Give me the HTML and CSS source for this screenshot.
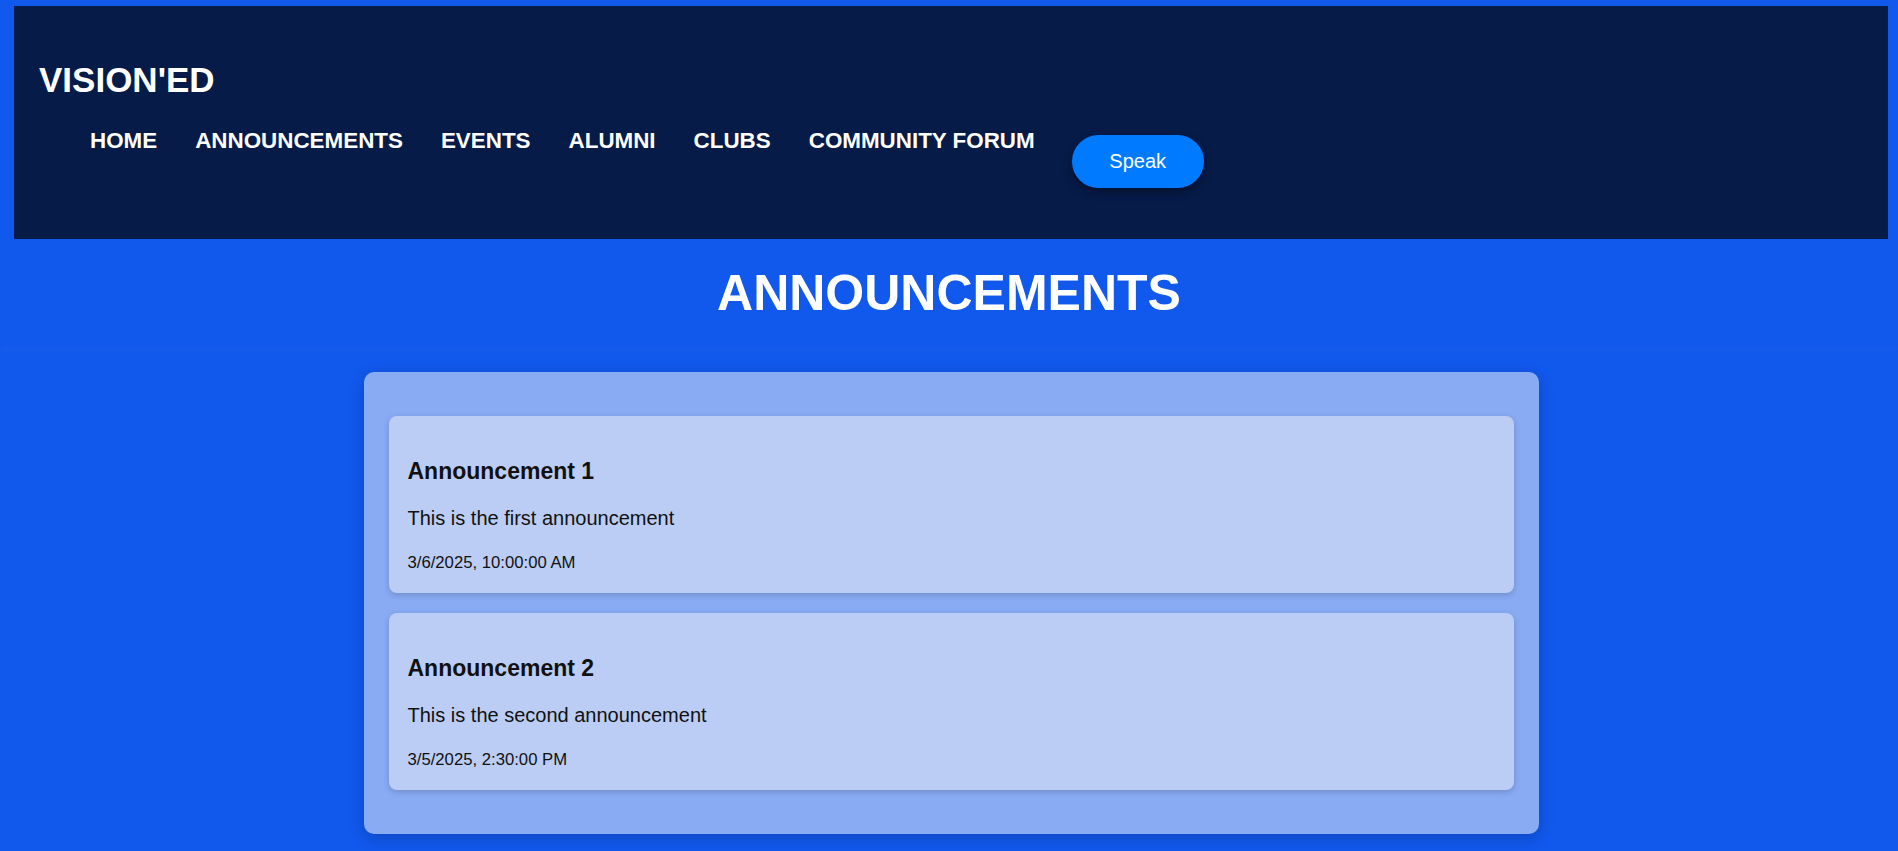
FILE: index.html
```html
<!DOCTYPE html>
<html lang="en">
<head>
<meta charset="utf-8">
<title>Vision'ED - Announcements</title>
<link rel="stylesheet" href="styles.css">
</head>
<body>
<header class="site-header">
  <h1 class="logo">VISION'ED</h1>
  <nav class="nav">
    <ul class="nav-list">
      <li><a class="nav-link" href="#">HOME</a></li>
      <li><a class="nav-link" href="#">ANNOUNCEMENTS</a></li>
      <li><a class="nav-link" href="#">EVENTS</a></li>
      <li><a class="nav-link" href="#">ALUMNI</a></li>
      <li><a class="nav-link" href="#">CLUBS</a></li>
      <li><a class="nav-link" href="#">COMMUNITY FORUM</a></li>
    </ul>
    <button class="speak-btn" type="button">Speak</button>
  </nav>
</header>

<section class="page-title">
  <h2 class="page-title-text">ANNOUNCEMENTS</h2>
</section>

<main class="main">
  <div class="panel">
    <article class="card">
      <h3 class="card-title">Announcement 1</h3>
      <p class="card-body">This is the first announcement</p>
      <p class="card-date">3/6/2025, 10:00:00 AM</p>
    </article>
    <article class="card">
      <h3 class="card-title">Announcement 2</h3>
      <p class="card-body">This is the second announcement</p>
      <p class="card-date">3/5/2025, 2:30:00 PM</p>
    </article>
  </div>
</main>
</body>
</html>
```

FILE: styles.css
```css
* {
  box-sizing: border-box;
}

body {
  margin: 0;
  background: #1158ec;
  font-family: "Liberation Sans", Arial, sans-serif;
  color: #111;
}

.site-header {
  margin: 6px 10px 0 14px;
  padding: 20px 25px 51px;
  background: #061b48;
}

.logo {
  margin: 34px 0 29px;
  font-size: 35px;
  line-height: 40px;
  font-weight: bold;
  color: #fff;
}

.nav {
  display: flex;
  align-items: flex-start;
}

.nav-list {
  display: flex;
  gap: 38px;
  margin: 0;
  padding: 0 0 0 51px;
  list-style: none;
}

.nav-link {
  display: block;
  font-size: 22.4px;
  line-height: 24px;
  font-weight: bold;
  color: #fff;
  text-decoration: none;
}

.speak-btn {
  margin: 6px 0 0 37px;
  width: 132px;
  height: 53px;
  border: none;
  border-radius: 27px;
  background: #007bff;
  color: #fff;
  font-family: "Liberation Sans", Arial, sans-serif;
  font-size: 20px;
  box-shadow: 0 4px 10px rgba(0, 0, 0, 0.35);
  cursor: pointer;
}

.page-title {
  padding: 25px 0 25px;
  text-align: center;
  box-shadow: 0 3px 6px rgba(255, 255, 255, 0.04);
  position: relative;
}

.page-title-text {
  margin: 0;
  font-size: 50px;
  line-height: 58px;
  font-weight: bold;
  color: #fff;
}

.main {
  margin: 0 10px 0 14px;
  padding: 25px 0 20px;
}

.panel {
  width: 1175px;
  margin: 0 auto;
  padding: 24px 25px;
  background: #88abf4;
  border-radius: 10px;
  box-shadow: 0 4px 15px rgba(0, 0, 0, 0.2);
}

.card {
  margin: 20px 0;
  padding: 20px 19px;
  background: #bbcdf4;
  border-radius: 8px;
  box-shadow: 0 2px 6px rgba(0, 0, 0, 0.18);
}

.card-title {
  margin: 22px 0 23px;
  font-size: 23px;
  line-height: 26px;
  font-weight: bold;
  color: #111;
}

.card-body {
  margin: 0 0 23px;
  font-size: 20px;
  line-height: 23px;
}

.card-date {
  margin: 0;
  font-size: 16.7px;
  line-height: 19px;
}

.card-date {
  padding-bottom: 1px;
}
```
